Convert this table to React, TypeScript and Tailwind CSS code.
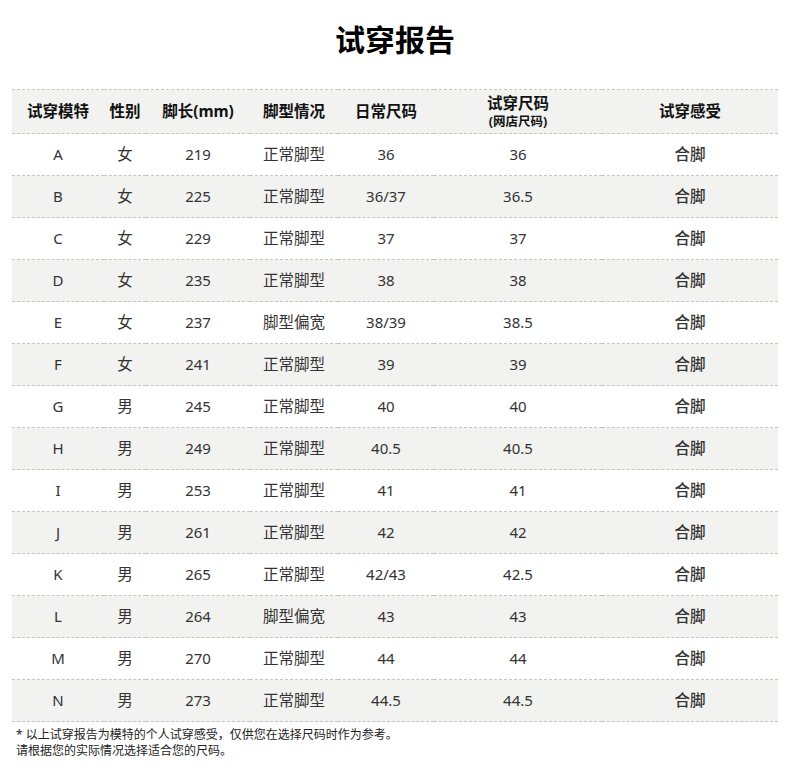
const rows: [string, string, string, string, string, string][] = [
  ['A', '女', '219', '正常脚型', '36', '36'],
  ['B', '女', '225', '正常脚型', '36/37', '36.5'],
  ['C', '女', '229', '正常脚型', '37', '37'],
  ['D', '女', '235', '正常脚型', '38', '38'],
  ['E', '女', '237', '脚型偏宽', '38/39', '38.5'],
  ['F', '女', '241', '正常脚型', '39', '39'],
  ['G', '男', '245', '正常脚型', '40', '40'],
  ['H', '男', '249', '正常脚型', '40.5', '40.5'],
  ['I', '男', '253', '正常脚型', '41', '41'],
  ['J', '男', '261', '正常脚型', '42', '42'],
  ['K', '男', '265', '正常脚型', '42/43', '42.5'],
  ['L', '男', '264', '脚型偏宽', '43', '43'],
  ['M', '男', '270', '正常脚型', '44', '44'],
  ['N', '男', '273', '正常脚型', '44.5', '44.5'],
];

const font = { fontFamily: '"Noto Sans", "Noto Sans CJK SC", sans-serif' };

export default function App() {
  return (
    <div className="w-[790px] h-[774px] bg-white text-[#333]" style={font}>
      <h1 className="pt-[20px] h-[89px] text-center text-[30px] leading-[40px] font-bold text-black">试穿报告</h1>
      <div className="px-[12px]">
        <table className="w-[766px] border-collapse table-fixed">
          <colgroup>
            <col className="w-[92px]" />
            <col className="w-[42px]" />
            <col className="w-[104px]" />
            <col className="w-[88px]" />
            <col className="w-[96px]" />
            <col className="w-[168px]" />
            <col className="w-[176px]" />
          </colgroup>
          <thead>
            <tr className="h-[44px] bg-[#f2f2f0] border-y border-dashed border-[#c4c4c4] text-[15.5px] font-bold text-[#111]">
              <th className="font-bold">试穿模特</th>
              <th className="font-bold">性别</th>
              <th className="font-bold">脚长(mm)</th>
              <th className="font-bold">脚型情况</th>
              <th className="font-bold">日常尺码</th>
              <th className="font-bold leading-[20px]">
                <div>试穿尺码</div>
                <div className="text-[12.5px] leading-[18px]">(网店尺码)</div>
              </th>
              <th className="font-bold">试穿感受</th>
            </tr>
          </thead>
          <tbody>
            {rows.map((r, i) => (
              <tr
                key={r[0]}
                className={`h-[42px] border-b border-dashed border-[#c4c4c4] text-[15.5px] text-center ${i % 2 === 1 ? 'bg-[#f2f2f0]' : 'bg-white'}`}
              >
                <td className="text-[15px]">{r[0]}</td>
                <td>{r[1]}</td>
                <td className="text-[15px]">{r[2]}</td>
                <td>{r[3]}</td>
                <td className="text-[15px]">{r[4]}</td>
                <td className="text-[15px]">{r[5]}</td>
                <td className="font-medium">合脚</td>
              </tr>
            ))}
          </tbody>
        </table>
      </div>
      <div className="pl-[16px] pt-[5px] text-[12px] leading-[16px] text-[#222]">
        <p>* 以上试穿报告为模特的个人试穿感受，仅供您在选择尺码时作为参考。</p>
        <p>请根据您的实际情况选择适合您的尺码。</p>
      </div>
    </div>
  );
}
